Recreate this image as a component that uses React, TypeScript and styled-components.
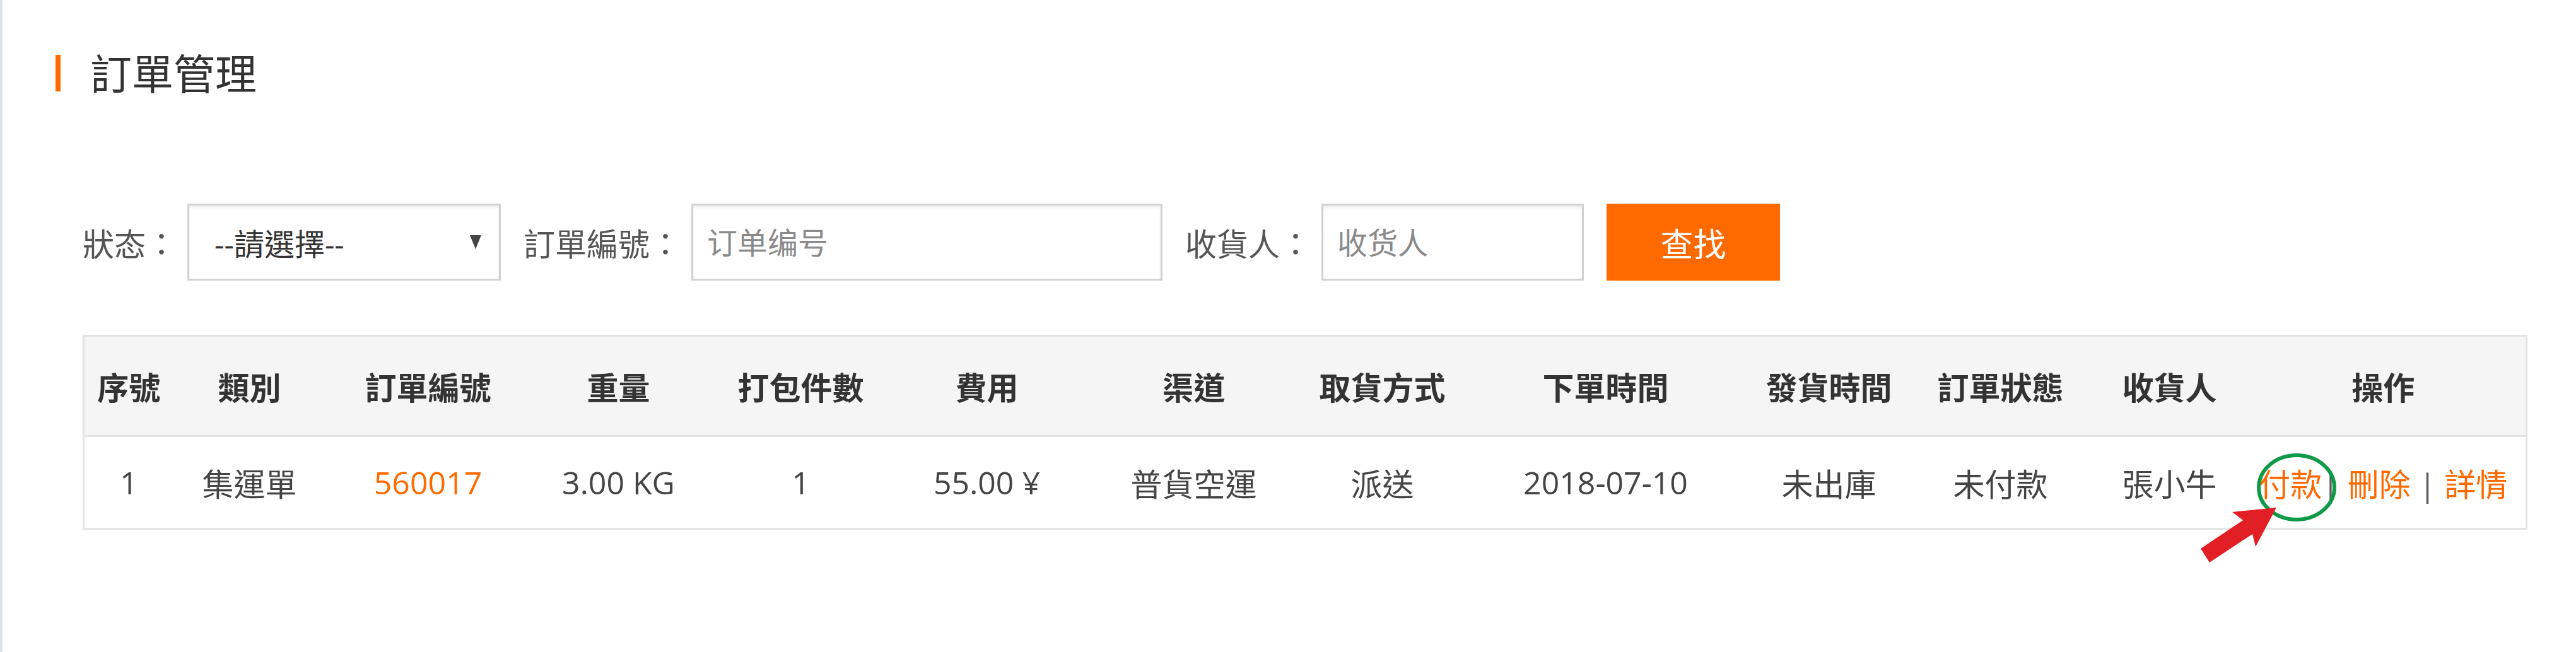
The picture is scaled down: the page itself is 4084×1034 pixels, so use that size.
import React from 'react'
import styled, { createGlobalStyle } from 'styled-components'

const GlobalStyle = createGlobalStyle`
  html, body {
    margin: 0;
    padding: 0;
    background: #fff;
  }
  body {
    font-family: "Open Sans", "Noto Sans CJK TC", sans-serif;
    color: #333;
  }
`

const ORANGE = '#ff6a00'

const Page = styled.div`
  box-sizing: border-box;
  width: 4084px;
  height: 1034px;
  border-left: 4px solid #dde4ec;
  padding: 83px 80px 0 84px;
`

const Title = styled.h2`
  display: flex;
  align-items: center;
  gap: 47px;
  margin: 0;
  font-size: 66px;
  line-height: 66px;
  font-weight: 400;
  color: #333;

  &::before {
    content: '';
    width: 8px;
    height: 58px;
    background: ${ORANGE};
  }
`

const Content = styled.div`
  padding-left: 43px;
`

const FilterBar = styled.form`
  display: flex;
  align-items: center;
  gap: 36px;
  margin-top: 174px;
  height: 122px;
`

const Field = styled.label`
  display: flex;
  align-items: center;
  gap: 16px;
  font-size: 50px;
  color: #555;
`

const SelectBox = styled.div`
  box-sizing: border-box;
  display: flex;
  align-items: center;
  justify-content: space-between;
  width: 497px;
  height: 122px;
  padding: 0 28px 0 40px;
  border: 3px solid #d2d2d2;
  box-shadow: inset 0 3px 4px rgba(0, 0, 0, 0.08);
  font-size: 48px;
  color: #333;
`

const Caret = styled.span`
  width: 0;
  height: 0;
  border-left: 9px solid transparent;
  border-right: 9px solid transparent;
  border-top: 22px solid #444;
`

const Input = styled.input<{ $width: number }>`
  box-sizing: border-box;
  width: ${p => p.$width}px;
  height: 122px;
  padding: 0 22px;
  border: 3px solid #d2d2d2;
  box-shadow: inset 0 3px 4px rgba(0, 0, 0, 0.08);
  outline: none;
  font-family: inherit;
  font-size: 48px;
  color: #333;

  &::placeholder {
    color: #8a8a8a;
  }
`

const SearchButton = styled.button`
  width: 275px;
  height: 122px;
  border: none;
  background: ${ORANGE};
  color: #fff;
  font-family: inherit;
  font-size: 52px;
  cursor: pointer;
`

const TableWrap = styled.div`
  position: relative;
  margin-top: 86px;
  width: 3873px;
`

const Table = styled.table`
  width: 100%;
  table-layout: fixed;
  border-collapse: collapse;
  border: 3px solid #e3e3e3;
`

const HeadCol = styled.th`
  height: 156px;
  padding: 0;
  background: #f5f5f5;
  border-bottom: 3px solid #e3e3e3;
  font-size: 50px;
  font-weight: 700;
  color: #333;
  text-align: center;
`

const Col = styled.td<{ $accent?: boolean }>`
  height: 144px;
  padding: 0;
  font-size: 50px;
  color: ${p => (p.$accent ? ORANGE : '#444')};
  text-align: center;
  white-space: nowrap;
`

const Action = styled.a`
  color: ${ORANGE};
  text-decoration: none;
`

const Sep = styled.span`
  color: #5a5a5a;
`

const Annotation = styled.svg`
  position: absolute;
  left: 3339px;
  top: 169px;
  width: 250px;
  height: 210px;
  overflow: visible;
  pointer-events: none;
`

const columns = [
  { label: '序號', width: 142 },
  { label: '類別', width: 242 },
  { label: '訂單編號', width: 324 },
  { label: '重量', width: 280 },
  { label: '打包件數', width: 298 },
  { label: '費用', width: 292 },
  { label: '渠道', width: 364 },
  { label: '取貨方式', width: 234 },
  { label: '下單時間', width: 474 },
  { label: '發貨時間', width: 234 },
  { label: '訂單狀態', width: 310 },
  { label: '收貨人', width: 226 },
  { label: '操作', width: 453 },
]

const order = {
  no: 1,
  kind: '集運單',
  id: '560017',
  weight: '3.00 KG',
  packs: 1,
  fee: '55.00 ¥',
  channel: '普貨空運',
  pickup: '派送',
  created: '2018-07-10',
  shipped: '未出庫',
  status: '未付款',
  receiver: '張小牛',
}

const App = () => {
  return (
    <Page>
      <GlobalStyle />
      <Title>訂單管理</Title>
      <Content>
        <FilterBar onSubmit={e => e.preventDefault()}>
          <Field>
            狀态：
            <SelectBox>
              --請選擇--
              <Caret />
            </SelectBox>
          </Field>
          <Field>
            訂單編號：
            <Input $width={747} placeholder="订单编号" />
          </Field>
          <Field>
            收貨人：
            <Input $width={416} placeholder="收货人" />
          </Field>
          <SearchButton type="submit">查找</SearchButton>
        </FilterBar>

        <TableWrap>
          <Table>
            <colgroup>
              {columns.map(c => (
                <col key={c.label} style={{ width: c.width }} />
              ))}
            </colgroup>
            <thead>
              <tr>
                {columns.map(c => (
                  <HeadCol key={c.label}>{c.label}</HeadCol>
                ))}
              </tr>
            </thead>
            <tbody>
              <tr>
                <Col>{order.no}</Col>
                <Col>{order.kind}</Col>
                <Col $accent>{order.id}</Col>
                <Col>{order.weight}</Col>
                <Col>{order.packs}</Col>
                <Col>{order.fee}</Col>
                <Col>{order.channel}</Col>
                <Col>{order.pickup}</Col>
                <Col>{order.created}</Col>
                <Col>{order.shipped}</Col>
                <Col>{order.status}</Col>
                <Col>{order.receiver}</Col>
                <Col>
                  <Action href="#">付款</Action>
                  <Sep>|</Sep> <Action href="#">刪除</Action> <Sep>|</Sep>{' '}
                  <Action href="#">詳情</Action>
                </Col>
              </tr>
            </tbody>
          </Table>

          {/* hand-drawn marker pointing at the pay link */}
          <Annotation viewBox="0 0 250 210">
            <ellipse cx="171" cy="73" rx="60" ry="51" fill="none" stroke="#0f9a48" strokeWidth="6" />
            <polygon
              points="139,105 69,112 86,125 19,170 33,192 101,147 106,167"
              fill="#e31f26"
            />
          </Annotation>
        </TableWrap>
      </Content>
    </Page>
  )
}

export default App
